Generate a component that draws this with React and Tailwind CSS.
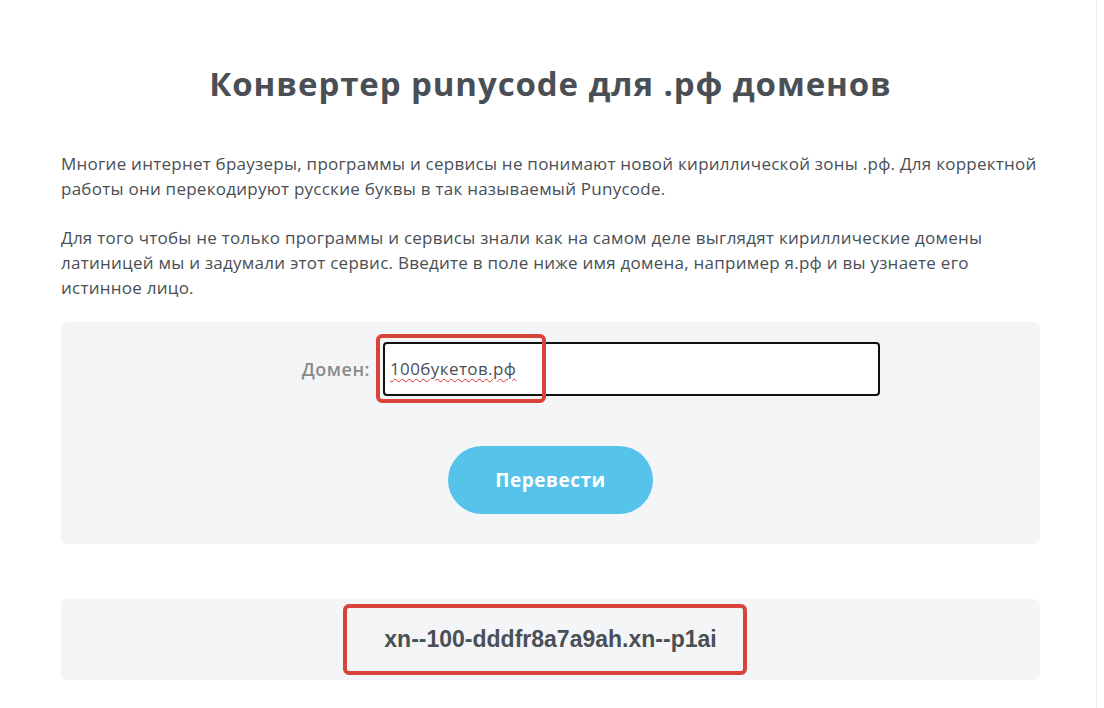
export default function App() {
  return (
    <div className="min-h-[708px] w-[1104px] bg-white flex" style={{ fontFamily: '"Open Sans", sans-serif' }}>
      <div className="w-[1097px] border-r border-[#ececec] px-[61px] pt-[64px]">
        <div className="w-[979px]">
          <h1
            className="text-center text-[33px] font-bold leading-[40px] text-[#4a4f55]"
            style={{ letterSpacing: '0.9px' }}
          >
            Конвертер punycode для .рф доменов
          </h1>

          <div className="mt-[47px] text-[17px] leading-[25px] text-[#4a4f55]" style={{ letterSpacing: '0.25px' }}>
            <p>
              Многие интернет браузеры, программы и сервисы не понимают новой кириллической зоны .рф. Для корректной работы они перекодируют русские буквы в так называемый Punycode.
            </p>
            <p className="mt-[24px]">
              Для того чтобы не только программы и сервисы знали как на самом деле выглядят кириллические домены латиницей мы и задумали этот сервис. Введите в поле ниже имя домена, например я.рф и вы узнаете его истинное лицо.
            </p>
          </div>

          <div className="mt-[22px] h-[222px] rounded-[6px] bg-[#f4f5f7] pt-[20px] flex flex-col">
            <div className="flex items-center">
              <span
                className="w-[322px] pr-[13px] text-right text-[18px] font-semibold text-[#8a8a8a]"
                style={{ letterSpacing: '0.5px' }}
              >
                Домен:
              </span>
              <div className="relative">
                <div
                  className="h-[54px] w-[497px] rounded-[4px] border-2 border-[#111] bg-white flex items-center pl-[5px] text-[17px] text-[#4a4f55]"
                  style={{ letterSpacing: '0.4px' }}
                >
                  <span className="underline decoration-wavy decoration-[#d33] decoration-1 underline-offset-[3px]">100букетов.рф</span>
                </div>
                <div className="absolute left-[-7px] top-[-8px] h-[69px] w-[170px] rounded-[6px] border-[4px] border-[#d8433b]" />
              </div>
            </div>
            <button
              className="mx-auto mt-[50px] h-[68px] w-[205px] rounded-full bg-[#56c3ea] text-[19px] font-bold text-white"
              style={{ letterSpacing: '0.5px' }}
            >
              Перевести
            </button>
          </div>

          <div className="mt-[55px] h-[81px] rounded-[6px] bg-[#f4f5f7] flex items-center justify-center">
            <div className="mr-[12px] flex h-[71px] w-[404px] items-center justify-center rounded-[6px] border-[4px] border-[#d8433b] pl-[12px]">
              <span className="text-[23px] font-bold text-[#4a4f55]" style={{ fontFamily: '"Liberation Sans", Arial, sans-serif' }}>
                xn--100-dddfr8a7a9ah.xn--p1ai
              </span>
            </div>
          </div>
        </div>
      </div>
    </div>
  )
}
